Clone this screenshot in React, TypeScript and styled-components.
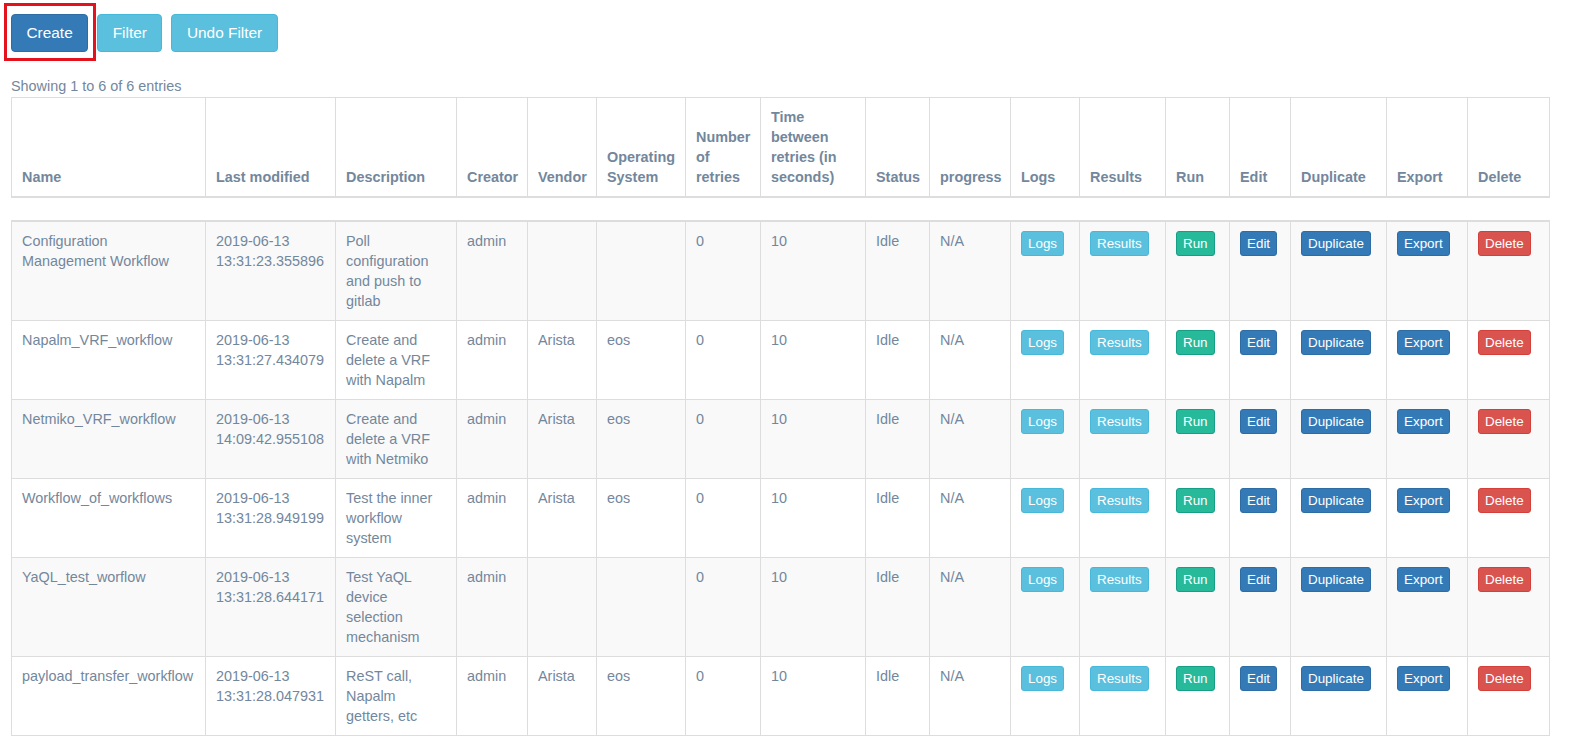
import React from "react";
import styled, { createGlobalStyle, css } from "styled-components";

const GlobalStyle = createGlobalStyle`
  html, body { margin: 0; padding: 0; background: #fff; }
  body {
    font-family: "Liberation Sans", Arial, Helvetica, sans-serif;
    font-size: 14.4px;
    color: #73879c;
  }
  * { box-sizing: border-box; }
`;

type Variant = "primary" | "info" | "success" | "danger";

const palette: Record<Variant, { bg: string; border: string }> = {
  primary: { bg: "#337ab7", border: "#2e6da4" },
  info: { bg: "#5bc0de", border: "#46b8da" },
  success: { bg: "#26b99a", border: "#169f85" },
  danger: { bg: "#d9534f", border: "#d43f3a" },
};

const variantCss = (v: Variant) => css`
  background: ${palette[v].bg};
  border: 1px solid ${palette[v].border};
`;

const Page = styled.div`
  padding: 14px 0 20px 11px;
`;

const Toolbar = styled.div`
  display: flex;
  align-items: flex-start;
  gap: 9px;
`;

const CreateWrap = styled.div`
  position: relative;
  display: flex;
`;

const Highlight = styled.div`
  position: absolute;
  top: -11px;
  left: -7px;
  right: -8px;
  bottom: -9px;
  border: 3px solid #e3121c;
  pointer-events: none;
`;

const ToolButton = styled.button<{ $variant: Variant }>`
  ${(p) => variantCss(p.$variant)}
  color: #fff;
  font-family: inherit;
  font-size: 15.4px;
  line-height: 22px;
  padding: 7px 14.5px;
  border-radius: 4px;
  cursor: pointer;
`;

const Info = styled.div`
  margin-top: 24px;
  line-height: 20px;
  font-size: 14.4px;
  height: 21px;
`;

const TableBox = styled.div`
  width: 1538px;
`;

const Table = styled.table`
  width: 1538px;
  table-layout: fixed;
  border-collapse: collapse;
  border-spacing: 0;
  border: 1px solid #dddddd;
`;

const BodyTable = styled(Table)`
  margin-top: 22px;
  border-top: 2px solid #dddddd;
`;

const Th = styled.th`
  text-align: left;
  vertical-align: bottom;
  font-weight: bold;
  line-height: 20px;
  padding: 9px 10px 9px;
  border: 1px solid #dddddd;
  border-bottom: 2px solid #dddddd;
  color: #73879c;
`;

const Row = styled.tr`
  &:nth-child(odd) {
    background: #f9f9f9;
  }
`;

const Td = styled.td`
  text-align: left;
  vertical-align: top;
  line-height: 20px;
  padding: 9px 10px 9px;
  border: 1px solid #dddddd;
  overflow: visible;
`;

const ActionButton = styled.button<{ $variant: Variant }>`
  ${(p) => variantCss(p.$variant)}
  display: inline-block;
  vertical-align: top;
  margin-top: 0;
  color: #fff;
  font-family: inherit;
  font-size: 13.4px;
  line-height: 21px;
  padding: 1px 6px;
  border-radius: 3px;
  cursor: pointer;
`;

const widths = [194, 130, 121, 71, 69, 89, 75, 105, 64, 81, 69, 86, 64, 61, 96, 81, 82];

const headers = [
  "Name",
  "Last modified",
  "Description",
  "Creator",
  "Vendor",
  "Operating System",
  "Number of retries",
  "Time between retries (in seconds)",
  "Status",
  "progress",
  "Logs",
  "Results",
  "Run",
  "Edit",
  "Duplicate",
  "Export",
  "Delete",
];

type Workflow = {
  name: string;
  date: string;
  time: string;
  description: string;
  vendor: string;
  os: string;
};

const rows: Workflow[] = [
  {
    name: "Configuration Management Workflow",
    date: "2019-06-13",
    time: "13:31:23.355896",
    description: "Poll configuration and push to gitlab",
    vendor: "",
    os: "",
  },
  {
    name: "Napalm_VRF_workflow",
    date: "2019-06-13",
    time: "13:31:27.434079",
    description: "Create and delete a VRF with Napalm",
    vendor: "Arista",
    os: "eos",
  },
  {
    name: "Netmiko_VRF_workflow",
    date: "2019-06-13",
    time: "14:09:42.955108",
    description: "Create and delete a VRF with Netmiko",
    vendor: "Arista",
    os: "eos",
  },
  {
    name: "Workflow_of_workflows",
    date: "2019-06-13",
    time: "13:31:28.949199",
    description: "Test the inner workflow system",
    vendor: "Arista",
    os: "eos",
  },
  {
    name: "YaQL_test_worflow",
    date: "2019-06-13",
    time: "13:31:28.644171",
    description: "Test YaQL device selection mechanism",
    vendor: "",
    os: "",
  },
  {
    name: "payload_transfer_workflow",
    date: "2019-06-13",
    time: "13:31:28.047931",
    description: "ReST call, Napalm getters, etc",
    vendor: "Arista",
    os: "eos",
  },
];

const actions: { label: string; variant: Variant }[] = [
  { label: "Logs", variant: "info" },
  { label: "Results", variant: "info" },
  { label: "Run", variant: "success" },
  { label: "Edit", variant: "primary" },
  { label: "Duplicate", variant: "primary" },
  { label: "Export", variant: "primary" },
  { label: "Delete", variant: "danger" },
];

const Cols = () => (
  <colgroup>
    {widths.map((w, i) => (
      <col key={i} style={{ width: w }} />
    ))}
  </colgroup>
);

export default function App() {
  return (
    <>
      <GlobalStyle />
      <Page>
        <Toolbar>
          <CreateWrap>
            <ToolButton $variant="primary">Create</ToolButton>
            <Highlight />
          </CreateWrap>
          <ToolButton $variant="info">Filter</ToolButton>
          <ToolButton $variant="info">Undo Filter</ToolButton>
        </Toolbar>
        <Info>Showing 1 to 6 of 6 entries</Info>
        <TableBox>
          <Table>
            <Cols />
            <thead>
              <tr>
                {headers.map((h) => (
                  <Th key={h}>{h}</Th>
                ))}
              </tr>
            </thead>
          </Table>
          <BodyTable>
            <Cols />
            <tbody>
              {rows.map((r) => (
                <Row key={r.name}>
                  <Td>{r.name}</Td>
                  <Td>
                    {r.date}
                    <br />
                    {r.time}
                  </Td>
                  <Td>{r.description}</Td>
                  <Td>admin</Td>
                  <Td>{r.vendor}</Td>
                  <Td>{r.os}</Td>
                  <Td>0</Td>
                  <Td>10</Td>
                  <Td>Idle</Td>
                  <Td>N/A</Td>
                  {actions.map((a) => (
                    <Td key={a.label}>
                      <ActionButton $variant={a.variant}>{a.label}</ActionButton>
                    </Td>
                  ))}
                </Row>
              ))}
            </tbody>
          </BodyTable>
        </TableBox>
      </Page>
    </>
  );
}
